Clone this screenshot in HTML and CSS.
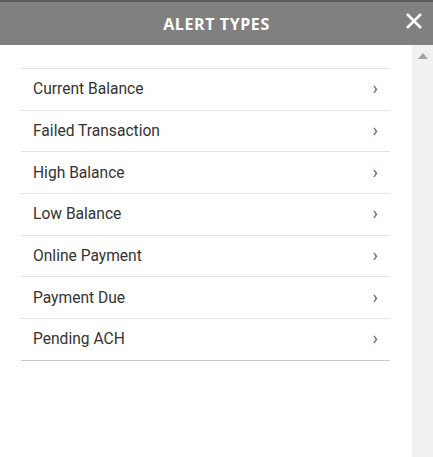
FILE: index.html
```html
<!DOCTYPE html>
<html>
	<head>
		<meta charset='utf-8'/>
		<title>Alert Types</title>
		<link rel="stylesheet" href="styles.css">
	</head>
	<body>
		<div class="header">
			<span class="title">ALERT TYPES</span>
			<span class="close">
				<svg width="18" height="18" viewBox="0 0 18 18"><path d="M2 2 L16 16 M16 2 L2 16" stroke="#fff" stroke-width="2.6" fill="none"/></svg>
			</span>
		</div>
		<div class="body">
			<div class="content">
				<ul class="alerts">
					<li><span>Current Balance</span><span class="chev">&rsaquo;</span></li>
					<li><span>Failed Transaction</span><span class="chev">&rsaquo;</span></li>
					<li><span>High Balance</span><span class="chev">&rsaquo;</span></li>
					<li><span>Low Balance</span><span class="chev">&rsaquo;</span></li>
					<li><span>Online Payment</span><span class="chev">&rsaquo;</span></li>
					<li><span>Payment Due</span><span class="chev">&rsaquo;</span></li>
					<li><span>Pending ACH</span><span class="chev">&rsaquo;</span></li>
				</ul>
			</div>
			<div class="scrollbar">
				<div class="arrow"></div>
			</div>
		</div>
	</body>
</html>
```
FILE: styles.css
```css
html, body {
	margin: 0;
	height: 100%;
}
body {
	background: #fff;
	font-family: Roboto, "Liberation Sans", sans-serif;
	display: flex;
	flex-direction: column;
	overflow: hidden;
}
.header {
	height: 43px;
	background: #808080;
	border-top: 2px solid #5c5c5c;
	display: flex;
	align-items: center;
	justify-content: center;
	position: relative;
}
.title {
	color: #fff;
	font-family: "Open Sans", "Liberation Sans", sans-serif;
	font-weight: 700;
	font-size: 16px;
	letter-spacing: 0.6px;
}
.close {
	position: absolute;
	right: 10px;
	top: 10px;
	width: 18px;
	height: 18px;
}
.body {
	flex: 1;
	display: flex;
}
.content {
	flex: 1;
	padding: 23px 22px 0 21px;
}
.alerts {
	list-style: none;
	margin: 0;
	padding: 0;
	border-top: 1px solid #e4e4e4;
	border-bottom: 1px solid #c8c8c8;
}
.alerts li {
	height: 40.7px;
	display: flex;
	align-items: center;
	justify-content: space-between;
	padding: 0 12px 0 12px;
	font-size: 15.6px;
	color: #333;
	border-top: 1px solid #e4e4e4;
}
.alerts li:first-child {
	border-top: none;
}
.chev {
	color: #666;
	font-size: 18px;
	margin-top: -3px;
}
.scrollbar {
	width: 21px;
	background: #f1f1f1;
	display: flex;
	justify-content: center;
	padding-top: 8px;
	box-sizing: border-box;
}
.arrow {
	width: 0;
	height: 0;
	border-left: 5px solid transparent;
	border-right: 5px solid transparent;
	border-bottom: 6px solid #a3a3a3;
}
```
